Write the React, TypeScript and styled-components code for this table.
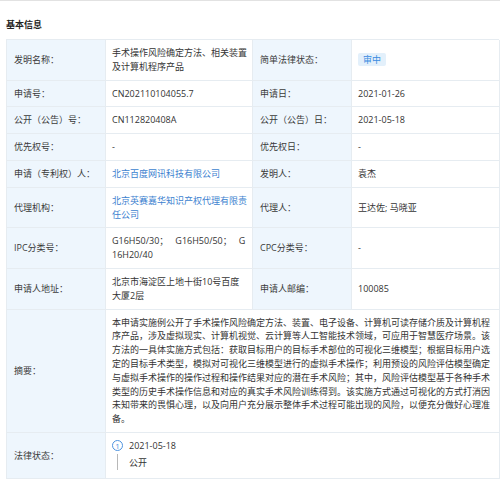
import React from "react";
import styled, { createGlobalStyle } from "styled-components";

const GlobalStyle = createGlobalStyle`
  html, body { margin: 0; padding: 0; background: #ffffff; overflow: hidden; }
  body {
    font-family: "Open Sans", "Noto Sans CJK SC", sans-serif;
    font-size: 9px;
    color: #333333;
  }
`;

const Page = styled.div`
  width: 500px;
  height: 483px;
  overflow: hidden;
  box-sizing: border-box;
  border-top: 1px solid #e2e2e2;
  padding: 0 1px 0 6px;
`;

const Title = styled.h3`
  margin: 17px 0 7px;
  font-size: 9px;
  line-height: 14px;
  font-weight: 700;
  color: #222222;
`;

const Table = styled.div`
  display: grid;
  grid-template-columns: 99px 147px 99px 148px;
  border-top: 1px solid #e6ecf1;
  border-left: 1px solid #e6ecf1;
`;

const Cell = styled.div<{ $wide?: boolean }>`
  box-sizing: border-box;
  display: flex;
  flex-direction: column;
  justify-content: center;
  border-right: 1px solid #e6ecf1;
  border-bottom: 1px solid #e6ecf1;
  padding: 6px 4px 6px 6px;
  line-height: 13.8px;
  word-break: break-all;
  grid-column: ${(p) => (p.$wide ? "span 3" : "auto")};
`;

const Label = styled(Cell)`
  background: #eef6fd;
  color: #3a3a3a;
  padding-left: 7px;
`;

const Value = styled(Cell)`
  background: #ffffff;
  color: #333333;
`;

const Badge = styled.span`
  align-self: flex-start;
  background: #e3f0fb;
  color: #3a8be0;
  padding: 0 5px;
  line-height: 13px;
  border-radius: 2px;
`;

const Link = styled.a`
  color: #3c7fcf;
  text-decoration: none;
`;

const Timeline = styled.div`
  display: grid;
  grid-template-columns: 11px 1fr;
  column-gap: 6px;
  row-gap: 3px;
  padding: 0 0 2px;
`;

const Dot = styled.span`
  box-sizing: border-box;
  width: 11px;
  height: 11px;
  border: 1px solid #4d93e0;
  border-radius: 50%;
  color: #4d93e0;
  font-size: 8px;
  line-height: 1;
  display: flex;
  align-items: center;
  justify-content: center;
  align-self: center;
`;

const Rail = styled.span`
  width: 1px;
  justify-self: center;
  background: #b8b8b8;
  margin-top: -2px;
`;

const StepText = styled.span`
  line-height: 14px;
`;

const abstract =
  "本申请实施例公开了手术操作风险确定方法、装置、电子设备、计算机可读存储介质及计算机程序产品，涉及虚拟现实、计算机视觉、云计算等人工智能技术领域，可应用于智慧医疗场景。该方法的一具体实施方式包括：获取目标用户的目标手术部位的可视化三维模型；根据目标用户选定的目标手术类型，模拟对可视化三维模型进行的虚拟手术操作；利用预设的风险评估模型确定与虚拟手术操作的操作过程和操作结果对应的潜在手术风险；其中，风险评估模型基于各种手术类型的历史手术操作信息和对应的真实手术风险训练得到。该实施方式通过可视化的方式打消因未知带来的畏惧心理，以及向用户充分展示整体手术过程可能出现的风险，以便充分做好心理准备。";

export default function App() {
  return (
    <Page>
      <GlobalStyle />
      <Title>基本信息</Title>
      <Table>
        <Label>发明名称：</Label>
        <Value>手术操作风险确定方法、相关装置及计算机程序产品</Value>
        <Label>简单法律状态：</Label>
        <Value>
          <Badge>审中</Badge>
        </Value>

        <Label>申请号：</Label>
        <Value>CN202110104055.7</Value>
        <Label>申请日：</Label>
        <Value>2021-01-26</Value>

        <Label>公开（公告）号：</Label>
        <Value>CN112820408A</Value>
        <Label>公开（公告）日：</Label>
        <Value>2021-05-18</Value>

        <Label>优先权号：</Label>
        <Value>-</Value>
        <Label>优先权日：</Label>
        <Value>-</Value>

        <Label>申请（专利权）人：</Label>
        <Value>
          <Link href="#">北京百度网讯科技有限公司</Link>
        </Value>
        <Label>发明人：</Label>
        <Value>袁杰</Value>

        <Label>代理机构：</Label>
        <Value>
          <Link href="#">北京英赛嘉华知识产权代理有限责任公司</Link>
        </Value>
        <Label>代理人：</Label>
        <Value>王达佐; 马晓亚</Value>

        <Label>IPC分类号：</Label>
        <Value>G16H50/30；&nbsp;&nbsp; G16H50/50；&nbsp;&nbsp; G16H20/40</Value>
        <Label>CPC分类号：</Label>
        <Value>-</Value>

        <Label>申请人地址：</Label>
        <Value>北京市海淀区上地十街10号百度大厦2层</Value>
        <Label>申请人邮编：</Label>
        <Value>100085</Value>

        <Label>摘要：</Label>
        <Value $wide>{abstract}</Value>

        <Label>法律状态：</Label>
        <Value $wide>
          <Timeline>
            <Dot>1</Dot>
            <StepText>2021-05-18</StepText>
            <Rail />
            <StepText>公开</StepText>
          </Timeline>
        </Value>
      </Table>
    </Page>
  );
}
